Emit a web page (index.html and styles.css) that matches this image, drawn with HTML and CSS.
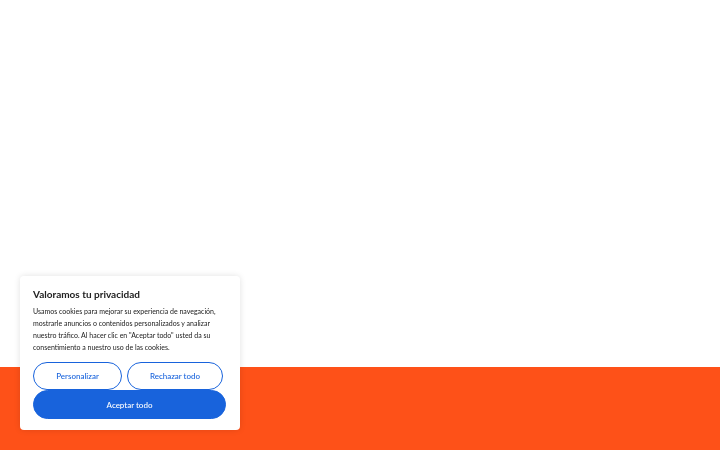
FILE: index.html
```html
<!DOCTYPE html>
<html lang="es">
<head>
<meta charset="utf-8">
<link rel="stylesheet" href="styles.css">
</head>
<body>
<div class="page">
  <div class="top"></div>
  <div class="band"></div>
</div>
<div class="consent">
  <h2 class="title">Valoramos tu privacidad</h2>
  <p class="text">Usamos cookies para mejorar su experiencia de navegación, mostrarle anuncios o contenidos personalizados y analizar nuestro tráfico. Al hacer clic en "Aceptar todo" usted da su consentimiento a nuestro uso de las cookies.</p>
  <div class="actions">
    <div class="row">
      <button class="btn outline custom">Personalizar</button>
      <button class="btn outline reject">Rechazar todo</button>
    </div>
    <button class="btn solid">Aceptar todo</button>
  </div>
</div>
</body>
</html>
```
FILE: styles.css
```css
html, body {
  margin: 0;
  padding: 0;
  height: 100%;
}
body {
  font-family: Lato, "Liberation Sans", sans-serif;
  background: #fff;
}
.page {
  display: flex;
  flex-direction: column;
  height: 450px;
}
.top {
  height: 367px;
  background: #fff;
}
.band {
  flex: 1;
  background: #fe5118;
}
.consent {
  position: fixed;
  left: 20px;
  bottom: 20px;
  width: 220px;
  box-sizing: border-box;
  padding: 12px 13px 11px 13px;
  background: #fff;
  border-radius: 4px;
  box-shadow: 0 0 6px rgba(0, 0, 0, 0.12);
}
.title {
  margin: 0;
  font-size: 10px;
  line-height: 12px;
  font-weight: 700;
  color: #212121;
}
.text {
  margin: 5px 0 0 0;
  font-size: 7px;
  line-height: 12px;
  color: #212121;
}
.actions {
  margin-top: 9px;
  display: flex;
  flex-direction: column;
}
.row {
  display: flex;
  gap: 5px;
}
.btn {
  font-family: Lato, "Liberation Sans", sans-serif;
  font-size: 8px;
  font-weight: 500;
  border-radius: 15px;
  cursor: pointer;
  padding: 0;
}
.outline {
  height: 28px;
  background: #fff;
  color: #1863dc;
  border: 1.5px solid #1863dc;
}
.custom {
  width: 89px;
}
.reject {
  width: 96px;
}
.solid {
  height: 29px;
  width: 193px;
  background: #1863dc;
  color: #fff;
  border: 1.5px solid #1863dc;
}
```
